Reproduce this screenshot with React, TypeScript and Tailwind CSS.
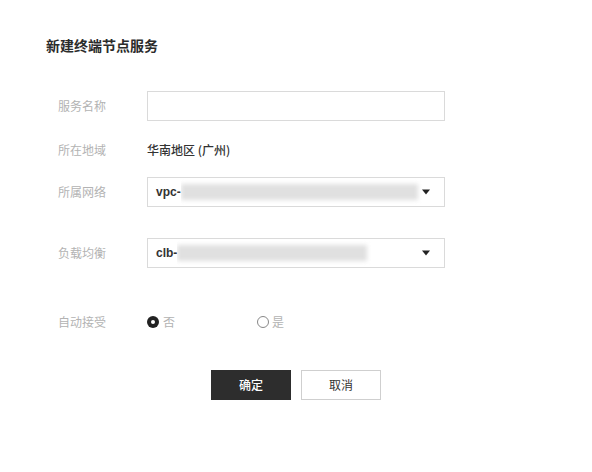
import React from "react";

const font = { fontFamily: '"Noto Sans CJK SC", "Noto Sans", sans-serif' };

function Label({ children }: { children: React.ReactNode }) {
  return <div className="w-[89px] shrink-0 text-[12px] text-[#b3b3b3]">{children}</div>;
}

function Caret() {
  return (
    <svg width="8" height="6" viewBox="0 0 8 6" className="shrink-0">
      <path d="M0 0.5 L8 0.5 L4 5.5 Z" fill="#222" />
    </svg>
  );
}

function Select({ prefix, barWidth }: { prefix: string; barWidth: number }) {
  return (
    <div className="w-[298px] h-[30px] border border-[#dadada] bg-white flex items-center pl-[8px] pr-[14px]">
      <span className="text-[12px] font-bold text-[#333] font-['Liberation_Sans',sans-serif]">{prefix}</span>
      <div className="flex-1 h-full flex items-center overflow-hidden">
        <div className="h-[16px] bg-[#e0e0e0] blur-[2px]" style={{ width: barWidth }} />
      </div>
      <Caret />
    </div>
  );
}

export default function App() {
  return (
    <div className="w-[592px] h-[472px] bg-white overflow-hidden" style={font}>
      <div className="pt-[35px]">
        <div className="ml-[46px] h-[20px] leading-[20px] text-[14px] font-bold text-[#2b2b2b]">新建终端节点服务</div>
        <div className="ml-[58px] mt-[36px] flex flex-col">
          <div className="h-[30px] flex items-center">
            <Label>服务名称</Label>
            <div className="w-[298px] h-[30px] border border-[#dadada] bg-white" />
          </div>
          <div className="mt-[19px] h-[20px] flex items-center">
            <Label>所在地域</Label>
            <span className="text-[12px] font-medium text-[#333]">华南地区 (广州)</span>
          </div>
          <div className="mt-[17px] h-[30px] flex items-center">
            <Label>所属网络</Label>
            <Select prefix="vpc-" barWidth={237} />
          </div>
          <div className="mt-[31px] h-[30px] flex items-center">
            <Label>负载均衡</Label>
            <Select prefix="clb-" barWidth={190} />
          </div>
          <div className="mt-[44px] h-[20px] flex items-center">
            <Label>自动接受</Label>
            <div className="w-[110px] flex items-center">
              <span className="w-[12px] h-[12px] rounded-full bg-[#222] flex items-center justify-center">
                <span className="w-[4px] h-[4px] rounded-full bg-white" />
              </span>
              <span className="ml-[4px] text-[12px] text-[#b3b3b3]">否</span>
            </div>
            <div className="flex items-center">
              <span className="w-[12px] h-[12px] rounded-full border-[1.5px] border-[#888] bg-white" />
              <span className="ml-[3px] text-[12px] text-[#b3b3b3]">是</span>
            </div>
          </div>
        </div>
        <div className="mt-[38px] flex justify-center gap-[10px]">
          <button className="w-[80px] h-[30px] bg-[#2d2d2d] text-white text-[12px] font-medium">确定</button>
          <button className="w-[80px] h-[30px] bg-white border border-[#cfcfcf] text-[#333] text-[12px]">取消</button>
        </div>
      </div>
    </div>
  );
}
